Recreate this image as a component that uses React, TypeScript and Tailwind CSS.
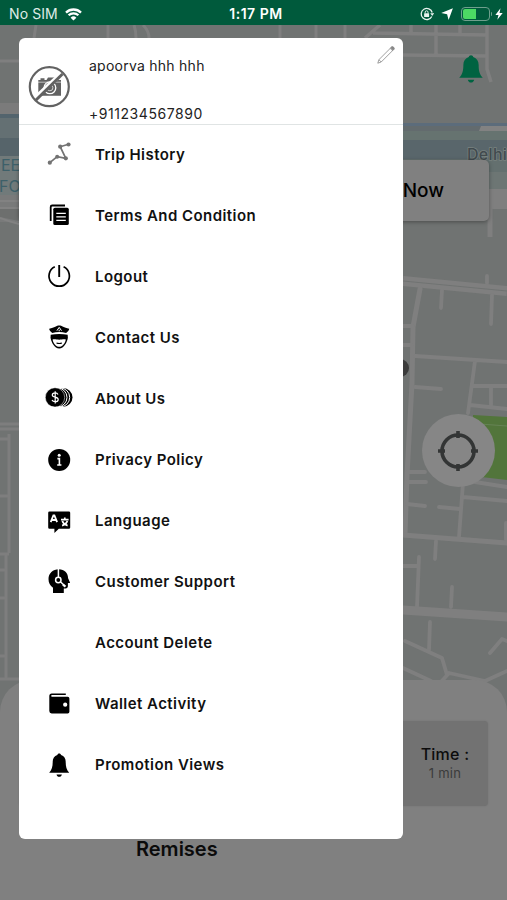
import type { ReactNode } from 'react';

function Icon({ children }: { children: ReactNode }) {
  return (
    <svg viewBox="0 0 28 28" className="h-7 w-7 shrink-0" fill="none">
      {children}
    </svg>
  );
}

const BellShape = () => (
  <path
    d="M14.2 2.6c1 0 1.7.6 1.9 1.500 3 .9 4.600 3.500 4.600 6.700 0 4.900.8 7.900 3.500 10.900H4.200c2.700-3 3.500-6 3.500-10.900 0-3.200 1.600-5.800 4.600-6.700.2-.9.900-1.500 1.900-1.500zM11.500 23.400h5.400c-.4 1.600-1.300 2.400-2.700 2.400s-2.300-.8-2.700-2.400z"
    fill="currentColor"
  />
);

const TripIcon = () => (
  <Icon>
    <path d="M4.800 22.700l7.400-6 8.600 1.600-5.600-11.600 8.300-2.400" stroke="#737373" strokeWidth="1.700" />
    <g fill="#737373">
      <circle cx="4.800" cy="22.700" r="2.100" />
      <circle cx="12.200" cy="16.700" r="2" />
      <circle cx="20.800" cy="18.300" r="2.100" />
      <circle cx="15.200" cy="6.700" r="2.100" />
      <circle cx="23.500" cy="4.500" r="2.100" />
    </g>
  </Icon>
);

const TermsIcon = () => (
  <Icon>
    <path d="M5.700 20V6a1.500 1.500 0 0 1 1.500-1.500H20" stroke="#000" strokeWidth="1.800" />
    <rect x="8.300" y="6.700" width="15.500" height="17.300" rx="1.600" fill="#000" />
    <path d="M11.300 12.300h9.500M11.300 15.800h9.500M11.300 19.300h9.500" stroke="#fff" strokeWidth="1.200" />
  </Icon>
);

const PowerIcon = () => (
  <Icon>
    <path d="M9.800 4.800a10.200 10.200 0 1 0 8.800 0" stroke="#000" strokeWidth="1.700" />
    <path d="M14.200 3v12" stroke="#000" strokeWidth="1.900" />
  </Icon>
);

const OfficerIcon = () => (
  <Icon>
    <path d="M14.200 2.500c2.600 0 4.600 2.300 10 3.300.2 1.600-1.600 2.700-3.100 4.200-4.300-1.200-9.500-1.200-13.800 0C5.800 8.500 4 7.400 4.200 5.800c5.400-1 7.400-3.300 10-3.300z" fill="#000" />
    <path d="M14.200 4.300l-2.300 3.400M14.200 4.300l2.300 3.400M14.200 6.800v1.500" stroke="#fff" strokeWidth="1" />
    <path d="M5.700 11.700c5-.9 12-.9 17 0l.2 3.100c-.8 4.600-4 10.700-8.700 10.700S6.300 19.400 5.500 14.800z" fill="#000" />
    <path d="M7.600 16.400c3.400-.2 4.200.4 6.600.4s3.200-.6 6.600-.4c-.6 3.800-3.300 7.300-6.600 7.300s-6-3.500-6.600-7.300z" fill="#fff" />
    <path d="M11.500 20c1.700.6 3.700.6 5.400 0" stroke="#000" strokeWidth="1.200" />
  </Icon>
);

const CoinsIcon = () => (
  <Icon>
    <circle cx="18" cy="13.400" r="9.500" fill="#000" />
    <circle cx="15.200" cy="13.400" r="9.500" fill="#000" stroke="#fff" strokeWidth="1" />
    <circle cx="12.500" cy="13.400" r="9.500" fill="#000" stroke="#fff" strokeWidth="1" />
    <circle cx="10" cy="13.400" r="9.700" fill="#000" stroke="#fff" strokeWidth=".5" />
    <path d="M13 10.400c-.5-1-1.500-1.500-2.800-1.500-1.700 0-2.900.8-2.900 2.100 0 3 5.900 1.300 5.900 4.400 0 1.400-1.200 2.300-3 2.300-1.500 0-2.700-.6-3.200-1.700M10.200 7.200v12.300" stroke="#fff" strokeWidth="1.200" />
  </Icon>
);

const InfoIcon = () => (
  <Icon>
    <circle cx="14.200" cy="13.900" r="11" fill="#000" />
    <circle cx="14.200" cy="9.200" r="1.500" fill="#fff" />
    <path d="M12.400 12.600h2v6M12.200 19h4.200" stroke="#fff" strokeWidth="1.600" />
  </Icon>
);

const LanguageIcon = () => (
  <Icon>
    <path d="M4.500 4.500h19.400a1.300 1.300 0 0 1 1.300 1.300v14.700a1.300 1.300 0 0 1-1.300 1.300H13.800L9.400 26v-4.200H4.500a1.300 1.300 0 0 1-1.300-1.300V5.800a1.300 1.300 0 0 1 1.300-1.300z" fill="#000" />
    <path d="M5.700 15.200l2.700-6.800h1l2.700 6.800M6.800 13h4" stroke="#fff" strokeWidth="1.800" />
    <path d="M16 12.600h7.600M19.800 10.400v2M17.300 14c.8 2.200 2.700 3.800 5.300 4.600M22.400 14c-.8 2.200-2.700 3.800-5.300 4.600" stroke="#fff" strokeWidth="1.700" />
  </Icon>
);

const SupportIcon = () => (
  <Icon>
    <path d="M13.800 1.200c5.600 0 9.200 3.600 9.300 9l1.800 4c.2.500 0 .9-.6.900h-1.400v3c0 1.600-.9 2.300-2.300 2.300h-1.800V25H8v-5.200c-2.900-2-4.500-5-4.500-8.700C3.500 5.200 7.900 1.200 13.800 1.200z" fill="#000" />
    <path d="M13.400 1v8.500M15.400 13.800l4 3.700" stroke="#fff" strokeWidth="1.500" />
    <circle cx="13.300" cy="12" r="2.700" stroke="#fff" strokeWidth="1.500" />
    <path d="M17.900 16.600l2.600 2" stroke="#fff" strokeWidth="2.200" />
  </Icon>
);

const WalletIcon = () => (
  <Icon>
    <path d="M6.800 3.500h14v1.600H7a.8.800 0 0 0 0 1.600h15.700a1.700 1.700 0 0 1 1.700 1.700v13.300a1.700 1.700 0 0 1-1.700 1.700h-16a2.400 2.400 0 0 1-2.400-2.400V6a2.500 2.500 0 0 1 2.500-2.500z" fill="#000" />
    <circle cx="20.200" cy="14.700" r="2.100" fill="#fff" />
  </Icon>
);

const menu = [
  { label: 'Trip History', icon: <TripIcon /> },
  { label: 'Terms And Condition', icon: <TermsIcon /> },
  { label: 'Logout', icon: <PowerIcon /> },
  { label: 'Contact Us', icon: <OfficerIcon /> },
  { label: 'About Us', icon: <CoinsIcon /> },
  { label: 'Privacy Policy', icon: <InfoIcon /> },
  { label: 'Language', icon: <LanguageIcon /> },
  { label: 'Customer Support', icon: <SupportIcon /> },
  { label: 'Account Delete', icon: null },
  { label: 'Wallet Activity', icon: <WalletIcon /> },
  { label: 'Promotion Views', icon: <Icon><BellShape /></Icon> },
];

function StatusBar() {
  return (
    <div className="grid h-[25px] grid-cols-3 items-center bg-[#005a3c] pt-[3px] pr-1 pl-[9px] text-white">
      <div className="flex items-center gap-[7px]">
        <span className="text-[14px] leading-4 tracking-[0.1px] text-[#dfebe6]">No SIM</span>
        <svg viewBox="0 0 17 13" className="h-[13px] w-[17px]" fill="none" stroke="#fff">
          <path d="M1 4.600a10.600 10.600 0 0 1 15 0M3.600 7.300a7 7 0 0 1 9.800 0" strokeWidth="2.300" />
          <path d="M8.500 12.600L5.600 9.700a4.100 4.100 0 0 1 5.800 0z" fill="#fff" stroke="none" />
        </svg>
      </div>
      <span className="text-center text-[14px] leading-4 font-semibold tracking-[0.500px]">1:17 PM</span>
      <div className="flex items-center justify-end">
        <svg viewBox="0 0 14 14" className="mr-[7px] h-3.5 w-3.5" fill="none" stroke="#e8f3ee">
          <path d="M11.800 9.500a5.600 5.600 0 1 1 .4-4" strokeWidth="1.300" />
          <path d="M10.200 6.200h4l-2 2.900z" fill="#e8f3ee" stroke="none" />
          <rect x="4.100" y="6.200" width="5" height="3.900" rx=".5" fill="#e8f3ee" stroke="none" />
          <path d="M5.200 6.400V5.200a1.400 1.400 0 0 1 2.800 0v1.200" />
        </svg>
        <svg viewBox="0 0 12 12" className="mr-[8px] h-3 w-3" fill="#fff">
          <path d="M11.900.2L7.600 11.900 6.100 6.300.2 5z" />
        </svg>
        <div className="-mt-[1px] flex h-[14px] w-[29px] rounded-[4px] border border-[#6f9f8d] p-[1px]">
          <div className="w-[13px] rounded-l-[2px] bg-[#4cd964]" />
        </div>
        <div className="mr-[3px] ml-[1px] h-1 w-[1.500px] rounded-r bg-[#6f9f8d]" />
        <svg viewBox="0 0 8 12" className="h-3 w-2" fill="#fff">
          <path d="M5.500.3L.4 7h3.100l-1.200 4.700L7.700 5H4.500z" />
        </svg>
      </div>
    </div>
  );
}

// dimmed street map behind the drawer
function StreetMap() {
  return (
    <svg viewBox="0 25 507 875" className="absolute inset-0 h-full w-full" fill="none">
      <rect y="25" width="507" height="875" fill="#707372" />
      <rect y="103" width="19" height="11" fill="#7b7b7b" />
      <rect y="114" width="19" height="25" fill="#647073" />
      <rect y="114" width="19" height="4" fill="#53646d" />
      <rect y="138" width="19" height="18" fill="#56646a" />
      <rect y="156" width="19" height="39" fill="#717a7a" />
      <rect y="195" width="19" height="27" fill="#797a7a" />
      <path d="M0 201h19M0 208h19" stroke="#828282" strokeWidth="2" />
      <path d="M0 209h19v12L0 217z" fill="#6d6f6e" />
      <path d="M0 218q10 4 19 6" stroke="#828282" strokeWidth="2" />

      <rect x="403" y="123" width="104" height="3" fill="#5c6c7b" />
      <rect x="403" y="126" width="104" height="5" fill="#636b6e" />
      <path d="M481 126h26v5h-28z" fill="#828282" />
      <rect x="403" y="131" width="104" height="9" fill="#667370" />
      <rect x="403" y="140" width="104" height="28" fill="#59666b" />
      <rect x="403" y="159" width="104" height="13" fill="#64706f" />
      <rect x="403" y="172" width="104" height="17" fill="#6d7674" />
      <rect x="485" y="189" width="22" height="20" fill="#7f7f7f" />

      <g stroke="#7f7f7f" strokeWidth="3.500">
        <path d="M373 33l114 2M403 55l84 1M487 25v44l4 13M436 25v30M411 25v8M460 25v8M380 25l-15 13" />
        <path d="M36 25l-2 13M108 25v13M134 25q2 6 2 13M143 25q6 6 6 13M280 25v13M316 25v13M345 25v13M0 61h19" strokeWidth="3" />
        <path d="M490 208v29" strokeWidth="5" />
      </g>
      <g stroke="#7f7f7f" strokeWidth="3.800" strokeLinecap="round" strokeLinejoin="round">
        <path d="M403 281l104 10" strokeWidth="10" strokeLinecap="butt" />
        <path d="M420 289l-7 38-1 56-5 92-2 60" strokeWidth="5" />
        <path d="M487 276v7M442 290l-1 18M492 295l-1 29M403 326h10M403 345h9M415 356l92 6M475 361l-7 52M415 387l26 2M474 386h33M491 386v19M470 405l37 4" />
        <path d="M407 472h18M407 482h19M407 504l18 2M439 507l21 2M463 483l-4 54M463 497l44 4M475 482l32 5M436 541l-1 18M419 557l-2 50M403 566h15M452 587l-1 20M430 622l-1 28M506 523v17" />
        <path d="M403 535l104 8" strokeWidth="5" />
        <path d="M403 610l104 7" strokeWidth="9" />
        <path d="M405 641l37 17 5 17M403 668l28 13M441 682l8-9 36 8 22-10M490 653l12-14 5 2" />
      </g>
      <path d="M403 281l104 10" stroke="#707372" />

      <path d="M473 415l34 2v63l-34-4z" fill="#52753b" />
      <path d="M480 424l27 2" stroke="#668355" />
      <circle cx="400" cy="368" r="9" fill="#3b3b3b" />

      <g stroke="#7e7e7e" strokeWidth="3">
        <path d="M0 424h19M0 429h19M0 439h9" />
        <path d="M9 434v119M6 554v126M0 496h9M0 554h9M0 570h6M0 598h6M0 656h6M0 679h19" />
      </g>

      <g fontFamily="Inter, sans-serif">
        <text x="1" y="171" fill="#3d6069" fontSize="16">EE</text>
        <text x="-1" y="192" fill="#3d6069" fontSize="16">FO</text>
        <text x="467" y="160" fill="#414a4e" stroke="#78827f" strokeWidth="1.500" paintOrder="stroke" fontSize="16" fontWeight="500" letterSpacing=".3">Delhi</text>
      </g>
    </svg>
  );
}

function Avatar() {
  return (
    <svg viewBox="0 0 42 42" className="h-[42px] w-[42px] shrink-0" fill="none">
      <path d="M10.300 14h2.200v-1.800h4V14h2l1.500-2.500h7.500L29 14h4v15.700H10.300z" fill="#626262" />
      <path d="M10 16.200h23" stroke="#fff" strokeWidth=".6" />
      <circle cx="21.900" cy="21.800" r="5.900" fill="#626262" stroke="#fff" strokeWidth="1.300" />
      <circle cx="21.900" cy="21.800" r="3" stroke="#ddd" strokeWidth=".9" />
      <path d="M9 30.500L32.500 8.500" stroke="#fff" strokeWidth="4.600" />
      <path d="M7.500 34.500L34.500 8" stroke="#626262" strokeWidth="3" />
      <circle cx="21.300" cy="20.700" r="19.500" stroke="#626262" strokeWidth="2.200" />
    </svg>
  );
}

function Drawer() {
  return (
    <aside className="absolute top-[13px] left-[19px] h-[801px] w-[384px] rounded-[6px] bg-white">
      <header className="flex h-[86.500px] border-b border-[#e0e4e4]">
        <div className="pt-[28px] pl-[8.500px]">
          <Avatar />
        </div>
        <div className="flex flex-1 flex-col pl-[19.500px] text-[14px] leading-5 text-[#222]">
          <span className="mt-[18px] tracking-[0.25px]">apoorva hhh hhh</span>
          <span className="mt-[27.500px] tracking-[0.55px]">+911234567890</span>
        </div>
        <svg viewBox="0 0 18 18" className="mt-[7.500px] mr-2 h-[18px] w-[18px]" fill="none" stroke="#888" strokeWidth=".8">
          <path d="M.8 17.200l1.100-3.500L14.500 1.100q1.200-.7 2.100.2t.2 2.100L4.200 16z" />
          <path d="M13.200 2.400l2.400 2.400M1.900 13.700l2.300 2.300" />
          <path d="M14.500 1.100q1.200-.7 2.100.2t.2 2.100l-.8.800-2.300-2.300z" fill="#888" />
        </svg>
      </header>
      <nav className="-mt-[1px]">
        {menu.map((item) => (
          <button key={item.label} className="flex h-[61.100px] w-full items-center pl-[26px] text-left">
            <span className="h-7 w-7">{item.icon}</span>
            <span className="mt-[1.500px] ml-[22px] text-[15px] font-semibold tracking-[0.45px] text-[#111]">{item.label}</span>
          </button>
        ))}
      </nav>
    </aside>
  );
}

export default function App() {
  return (
    <div className="flex h-[900px] w-[507px] flex-col overflow-hidden font-['Inter',sans-serif]">
      <StatusBar />
      <main className="relative flex-1 bg-[#707372]">
        <StreetMap />
        <div className="relative flex h-full flex-col items-end">
          <div className="mt-[29px] mr-[22px] text-[#006341]">
            <svg viewBox="3 1.500 22.400 25.500" className="h-[30px] w-[28px]">
              <BellShape />
            </svg>
          </div>
          <div className="mt-[76px] mr-[18px] flex h-[61px] w-[470px] items-center justify-end rounded-[5px] bg-[#808080] pt-[2px] pr-[45px] text-[19px] font-medium text-black shadow-[0_1px_4px_rgba(0,0,0,0.35)]">
            Now
          </div>
          <div className="mt-[193px] mr-[12.500px] flex h-[73px] w-[73px] items-center justify-center rounded-full bg-[#868686]">
            <svg viewBox="0 0 42 42" className="h-[42px] w-[42px]" fill="none" stroke="#333535" strokeWidth="3.600">
              <circle cx="21" cy="21" r="16" />
              <path d="M21 1v7M21 34v7M1 21h7M34 21h7" />
            </svg>
          </div>
          <section className="mt-auto h-[220px] w-full rounded-t-[32px] bg-[#808080] px-[19px] pt-[41px]">
            <div className="flex h-[85px] justify-end rounded-[4px] bg-[#727272] shadow-[0_0_2px_rgba(0,0,0,0.12)]">
              <div className="flex w-[86px] flex-col items-center pt-[22px]">
                <span className="text-[16px] leading-[22px] font-medium tracking-[0.25px] text-[#0c0c0c]">Time :</span>
                <span className="text-[13px] leading-4 tracking-[0.25px] text-[#3b3b3b]">1 min</span>
              </div>
            </div>
            <h2 className="mt-[29px] ml-[117px] text-[20px] leading-7 font-semibold text-[#0b0b0b]">Remises</h2>
          </section>
        </div>
        <Drawer />
      </main>
    </div>
  );
}
